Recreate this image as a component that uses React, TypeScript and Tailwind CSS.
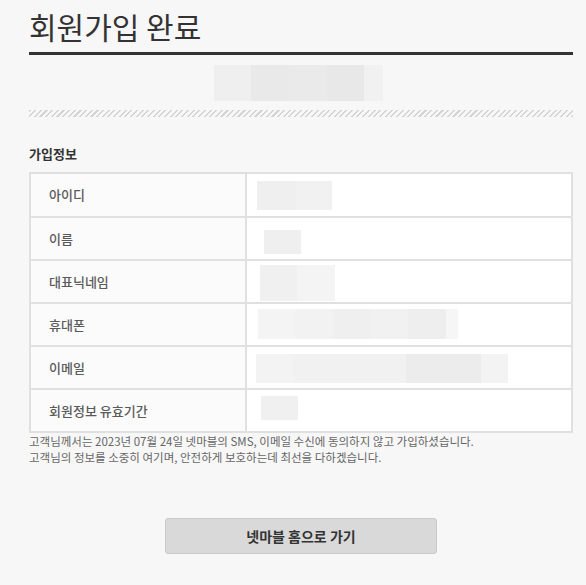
import React from "react";

type Blur = { cls: string };

type InfoRow = {
  label: string;
  offset: string;
  blocks: Blur[];
};

const headerBlur: Blur[] = [
  { cls: "w-[37px] bg-[#efefef]" },
  { cls: "w-[38px] bg-[#e9e9e9]" },
  { cls: "w-[38px] bg-[#eaeaea]" },
  { cls: "w-[37px] bg-[#e8e8e8]" },
  { cls: "w-[19px] bg-[#f1f1f1]" },
];

const rows: InfoRow[] = [
  {
    label: "아이디",
    offset: "ml-[10px] mt-[7px] h-[29px]",
    blocks: [{ cls: "w-[39px] bg-[#efefef]" }, { cls: "w-[36px] bg-[#f1f1f1]" }],
  },
  {
    label: "이름",
    offset: "ml-[17px] mt-[12px] h-[24px]",
    blocks: [{ cls: "w-[37px] bg-[#efefef]" }],
  },
  {
    label: "대표닉네임",
    offset: "ml-[13px] mt-[4px] h-[36px]",
    blocks: [{ cls: "w-[37px] bg-[#f0f0f0]" }, { cls: "w-[38px] bg-[#f4f4f4]" }],
  },
  {
    label: "휴대폰",
    offset: "ml-[11px] mt-[5px] h-[30px]",
    blocks: [
      { cls: "w-[37px] bg-[#f4f4f4]" },
      { cls: "w-[38px] bg-[#f2f2f2]" },
      { cls: "w-[37px] bg-[#efefef]" },
      { cls: "w-[38px] bg-[#f1f1f1]" },
      { cls: "w-[38px] bg-[#eeeeee]" },
      { cls: "w-[12px] bg-[#f6f6f6]" },
    ],
  },
  {
    label: "이메일",
    offset: "ml-[9px] mt-[7px] h-[29px]",
    blocks: [
      { cls: "w-[37px] bg-[#f3f3f3]" },
      { cls: "w-[75px] bg-[#f1f1f1]" },
      { cls: "w-[38px] bg-[#f1f1f1]" },
      { cls: "w-[75px] bg-[#ececec]" },
      { cls: "w-[27px] bg-[#f3f3f3]" },
    ],
  },
  {
    label: "회원정보 유효기간",
    offset: "ml-[14px] mt-[6px] h-[24px]",
    blocks: [{ cls: "w-[37px] bg-[#f0f0f0]" }],
  },
];

export default function App() {
  return (
    <div
      className="min-h-screen w-full bg-[#f7f7f7] text-[#333]"
      style={{ fontFamily: '"Noto Sans CJK KR", "Noto Sans", sans-serif' }}
    >
      <div className="ml-[29px] w-[544px]">
        <h1 className="border-b-[3px] border-[#333] pb-[9px] pt-[9px] text-[30px] font-normal leading-[34px] text-[#333]">
          회원가입 완료
        </h1>

        <div className="ml-[185px] mt-[10px] flex h-[36px]">
          {headerBlur.map((b, i) => (
            <div key={i} className={`h-full ${b.cls}`} />
          ))}
        </div>

        <div className="mt-[9px] h-[7px] bg-[repeating-linear-gradient(135deg,#d4d4d4_0px,#d4d4d4_1.5px,transparent_1.5px,transparent_4px)]" />

        <h2 className="mt-[27px] text-[13px] font-bold leading-[20px] text-[#333]">가입정보</h2>

        <div className="mt-[8px] border-2 border-[#e0e0e0] bg-white">
          {rows.map((row, i) => (
            <div
              key={row.label}
              className={`flex ${i > 0 ? "h-[43px] border-t-2 border-[#e0e0e0]" : "h-[42px]"}`}
            >
              <div className="flex w-[216px] shrink-0 items-center border-r-2 border-[#e0e0e0] bg-[#fbfbfb] pl-[18px] text-[13px] font-medium text-[#5a5a5a]">
                {row.label}
              </div>
              <div className="flex-1">
                <div className={`flex ${row.offset}`}>
                  {row.blocks.map((b, j) => (
                    <div key={j} className={`h-full ${b.cls}`} />
                  ))}
                </div>
              </div>
            </div>
          ))}
        </div>

        <div className="text-[11.5px] leading-[16px] text-[#666]">
          <p>고객님께서는 2023년 07월 24일 넷마블의 SMS, 이메일 수신에 동의하지 않고 가입하셨습니다.</p>
          <p>고객님의 정보를 소중히 여기며, 안전하게 보호하는데 최선을 다하겠습니다.</p>
        </div>

        <div className="mt-[53px] flex justify-center">
          <button
            type="button"
            className="h-[36px] w-[272px] rounded-[3px] border border-[#cacaca] bg-[#d9d9d9] text-[14px] font-bold text-[#333]"
          >
            넷마블 홈으로 가기
          </button>
        </div>
      </div>
    </div>
  );
}
